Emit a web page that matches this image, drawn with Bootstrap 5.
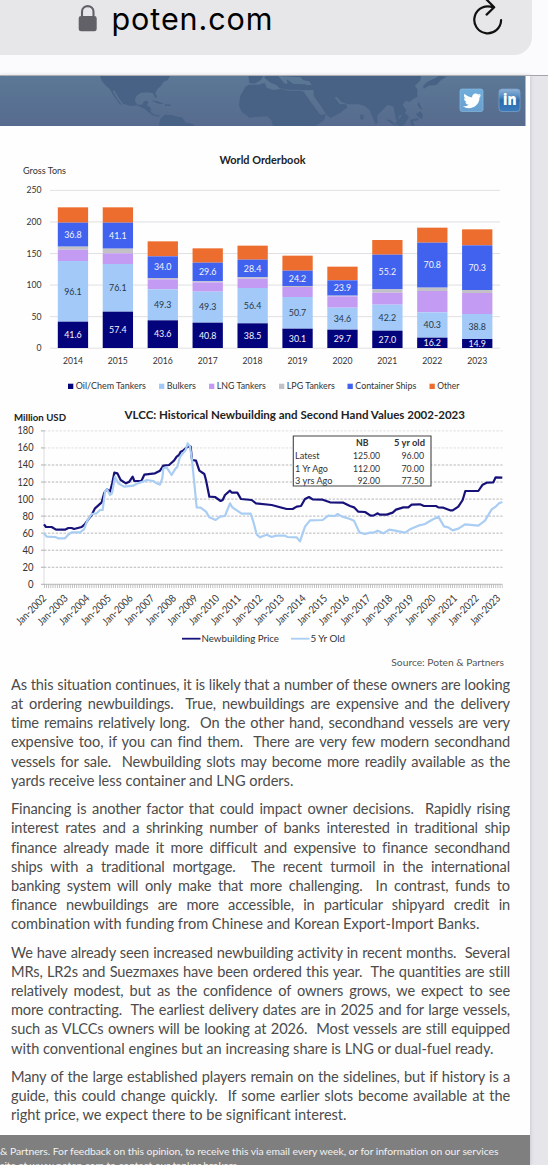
<!DOCTYPE html>
<html lang="en">
<head>
<meta charset="utf-8">
<meta name="viewport" content="width=device-width, initial-scale=1">
<title>poten.com</title>
<link href="https://cdn.jsdelivr.net/npm/bootstrap@5.3.0/dist/css/bootstrap.min.css" rel="stylesheet">
<style>
  body{background:#e5e5ea;font-family:Lato,"Open Sans",sans-serif;font-variant-ligatures:none;height:1165px;overflow:hidden}
  .browser-bar{height:76px;background:#fbfbfd;border-bottom:1px solid #a4a4aa}
  .address{width:532px;height:55px;background:#e7e7e9;border-radius:0 0 18px 0;font-family:Inter,sans-serif}
  .address svg{display:block}
  .host{font-size:30.5px;line-height:38px;color:#111}
  .sheet{width:530px;height:1089px;background:#fefefe;box-shadow:0 0 4px #bdbdc6}
  .banner{width:525.5px;height:50px;flex:none}
  .plot{display:block;flex:none}
  .plot text{font-family:Lato,sans-serif;fill:#333}
  .article{padding:0 20px 0 11px;color:#4c4c4c;font-size:14.6px;letter-spacing:-.14px;line-height:19.15px;height:460px;flex:none}
  .article p{margin:0 0 9.35px}
  .article span{display:block;white-space:nowrap;text-align:justify;text-align-last:justify}
  .article span:last-child{text-align-last:left;letter-spacing:-.02px}
  .source{height:27px;padding:7px 26px 0 0;font-size:10.25px;line-height:14px;color:#555;flex:none}
  .closing{background:#7f7f7f;color:#f2f2f2;height:31px;font-size:10.4px;letter-spacing:-.063px;line-height:14.4px;padding-top:9px;flex:none}
</style>
</head>
<body>
<header class="browser-bar">
  <div class="address">
    <svg width="532" height="55" viewBox="0 0 532 55">
      <rect x="78.7" y="16" width="18" height="15.3" rx="2.4" fill="#626167"/>
      <path d="M82 17v-5.2c0-7.6 11.5-7.6 11.5 0V17" fill="none" stroke="#626167" stroke-width="2.1"/>
      <text class="host" x="111.5" y="29.5" textLength="161">poten.com</text>
      <path d="M493.5 7.8a13.4 13.4 0 1 0 7.6 12.2M486 -1l8.2 8.2-7.6 7.4" fill="none" stroke="#111" stroke-width="2.2" stroke-linecap="round" stroke-linejoin="round"/>
    </svg>
  </div>
</header>
<main class="sheet d-flex flex-column">
  <svg class="banner" viewBox="0 76 525.5 50" preserveAspectRatio="none">
    <defs>
      <linearGradient id="sea" x2="0" y2="1"><stop stop-color="#5b7896"/><stop offset="1" stop-color="#576b8e"/></linearGradient>
      <linearGradient id="tw" x2="0" y2="1"><stop stop-color="#6faedb"/><stop offset="1" stop-color="#689fcf"/></linearGradient>
      <linearGradient id="li" x2="0" y2="1"><stop stop-color="#8fb2d6"/><stop offset=".3" stop-color="#5b90c6"/><stop offset=".5" stop-color="#286bae"/><stop offset="1" stop-color="#3d7bbb"/></linearGradient>
    </defs>
    <path fill="url(#sea)" d="M0 76h525.5v50H0z"/>
    <g fill="#476284" transform="scale(.3495 .3333)">
      <path d="M286 228H486L480 240 468 245 460 258 450 268 444 280 450 292 444 293 437 279 420 277 402 279 389 289 386 303 393 314 407 314 412 304 424 303 421 317 430 322 432 337 445 345 458 345 452 350 434 344 414 327 392 316 375 318 352 311 338 291 327 271 322 273 336 298 350 316 342 311 327 290 314 268 301 255 292 244Z"/>
      <path d="M434 302l15 1 20 9-15-1zM472 313l17 1-2 4-15-1zM455 378l3-20 14-14 20 1 15 5 14 2 9 15 23 6 6 10z"/>
      <path d="M711 228h42l-7 12-17 11-16-2zM760 228h36l17 22 10 2-3-14 20 14 35 1-2 18-50-2-23-4-8-9-18-8-18-15z"/>
      <path d="M711 254l29 0 17-5 6 14 18 7 25-3 18 5 35 0 10 3 18 28 17 25 13 17 16-2-6 18-26 18H782l-6-20-12-10-28 1-22 3-22-17-8-18 3-29 15-28z"/>
      <path d="M800 228H1205l-3 14-15 15 8 13-3 20-20 15-12-3-8 13 10 14-6 22-12-7-5 12 15 24-5 1-16-24-8-38-17-4-18 20-11 11 1 23-6 4-16-42-15-13-17-5-32 0-17-7-13-15-7 1 15 20 18 1 4 9-20 16-28 16-11-9-15-25-22-31-1-20-18 2-19-4 4-13 28 2-7-12-17-3-8-9z"/>
      <path d="M1031 343l10 3-2 14-8-3zM1222 246l24-12 10-7 23 3-17 10-14 15-22 2-13 9-3-7zM1189 278l7 10-7 6zM1197 304l5 12 7 13-7-3-7-11zM1103 358l15 3 20 17-15-5zM1130 369l20-22 12-6 8 11-13 22-15 4zM1174 359l20-4 5 5-17 4 3 14-10-4zM1190 342l13-8 7 12-3 12-10-7z"/>
    </g>
    <rect x="460" y="89" width="23" height="22.5" rx="2" fill="url(#tw)" stroke="#86b9df" stroke-width=".7"/>
    <path fill="#fff" transform="translate(461.8 91) scale(1.2 1.15)" d="M.8 13.3c2 .1 3.5-.3 5-1.4-1.5-.2-2.5-1-2.9-2.2h1.4C2.7 9.1 1.8 8 1.8 6.4l1.5.4C1.8 5.5 1.5 4 2.3 2.4c1.8 2 3.8 3 6.3 3.2-.4-2.9 2.9-4.7 5.2-2.5l2-.8-1.2 1.9 1.7-.4-1.5 1.7c.1 7.5-7.7 12.2-14 7.8z"/>
    <rect x="499" y="89" width="21" height="22.5" rx="3" fill="url(#li)" stroke="#7ba4cf" stroke-width=".7"/>
    <text x="503" y="104.5" textLength="13.5" lengthAdjust="spacingAndGlyphs" font-family="Open Sans" font-size="15" font-weight="800" fill="#fff">in</text>
  </svg>

  <svg class="plot" id="orderbook" width="525" height="274" viewBox="0 126 525 274"></svg>
  <svg class="plot" id="values" width="525" height="248" viewBox="0 400 525 248"></svg>

  <div class="source text-end">Source: Poten &amp; Partners</div>
  <article class="article">
    <p><span>As this situation continues, it is likely that a number of these owners are looking</span>
    <span>at ordering newbuildings.&nbsp; True, newbuildings are expensive and the delivery</span>
    <span>time remains relatively long.&nbsp; On the other hand, secondhand vessels are very</span>
    <span>expensive too, if you can find them.&nbsp; There are very few modern secondhand</span>
    <span>vessels for sale.&nbsp; Newbuilding slots may become more readily available as the</span>
    <span>yards receive less container and LNG orders.</span></p>
    <p><span>Financing is another factor that could impact owner decisions.&nbsp; Rapidly rising</span>
    <span>interest rates and a shrinking number of banks interested in traditional ship</span>
    <span>finance already made it more difficult and expensive to finance secondhand</span>
    <span>ships with a traditional mortgage.&nbsp; The recent turmoil in the international</span>
    <span>banking system will only make that more challenging.&nbsp; In contrast, funds to</span>
    <span>finance newbuildings are more accessible, in particular shipyard credit in</span>
    <span>combination with funding from Chinese and Korean Export-Import Banks.</span></p>
    <p><span>We have already seen increased newbuilding activity in recent months.&nbsp; Several</span>
    <span>MRs, LR2s and Suezmaxes have been ordered this year.&nbsp; The quantities are still</span>
    <span>relatively modest, but as the confidence of owners grows, we expect to see</span>
    <span>more contracting.&nbsp; The earliest delivery dates are in 2025 and for large vessels,</span>
    <span>such as VLCCs owners will be looking at 2026.&nbsp; Most vessels are still equipped</span>
    <span>with conventional engines but an increasing share is LNG or dual-fuel ready.</span></p>
    <p><span>Many of the large established players remain on the sidelines, but if history is a</span>
    <span>guide, this could change quickly.&nbsp; If some earlier slots become available at the</span>
    <span>right price, we expect there to be significant interest.</span></p>
  </article>
  <footer class="closing text-nowrap overflow-hidden">
    <div>&amp; Partners. For feedback on this opinion, to receive this via email every week, or for information on our services</div>
    <div>site at www.poten.com to contact our tanker brokers.</div>
  </footer>
</main>
<script>
const text = (x, y, s, size, o = {}) =>
  `<text x="${x}" y="${y}" font-size="${size}" text-anchor="${o.a || 'start'}" ${o.b ? 'font-weight="700"' : ''} ${o.w ? `textLength="${o.w}" lengthAdjust="spacingAndGlyphs"` : ''} ${o.f ? `style="fill:${o.f}"` : ''} ${o.t ? `transform="${o.t}"` : ''}>${s}</text>`;

/* Stacked bars: boundaries of each stack, top to bottom, in thirds of a pixel */
const stacks = [
  [202,248,320,329,363,545],[202,248,326,340,372,515],[304,349,414,418,448,541],
  [325,368,424,427,455,548],[317,359,412,416,444,550],[347,392,438,441,471,566],
  [380,421,467,469,503,569],[300,344,448,458,494,572],[263,308,443,453,517,593],[268,316,450,459,522,597]];
const labels = [['36.8','96.1','41.6'],['41.1','76.1','57.4'],['34.0','49.3','43.6'],['29.6','49.3','40.8'],['28.4','56.4','38.5'],
  ['24.2','50.7','30.1'],['23.9','34.6','29.7'],['55.2','42.2','27.0'],['70.8','40.3','16.2'],['70.3','38.8','14.9']];
const fills = ['#ec6d2d','#4062ee','#c2c2c6','#c49bf3','#a2c9f7','#03037c'];
let h = text(219.5, 164, 'World Orderbook', 10.5, {b:1, w:86, f:'#222'}) + text(23, 174, 'Gross Tons', 9, {w:43});
for (let v = 0; v <= 250; v += 50) {
  const y = 348.2 - v * .6312;
  h += `<path d="M50 ${y}H500" stroke="#dedee2" stroke-width=".9"/>` + text(41.5, y + 3, v, 9, {a:'end', w:v ? (v < 100 ? 10 : 15) : 5});
}
stacks.forEach((s, i) => {
  const x = 57.8 + i * 44.92, e = [...s, 624];
  fills.forEach((f, k) => h += `<rect x="${x}" y="${140 + e[k] / 3}" width="30.3" height="${(e[k + 1] - e[k]) / 3}" fill="${f}"/>`);
  [1, 4, 5].forEach((k, n) => h += text(x + 15.1, 140 + (e[k] + e[k + 1]) / 6 + 3.2, labels[i][n], 9, {a:'middle', w:17.5, f:k == 4 ? '#283748' : '#f2f4ff'}));
  h += text(x + 15.1, 363.5, 2014 + i, 9, {a:'middle', w:20});
});
[[68,'Oil/Chem Tankers',70,5],[159,'Bulkers',29,4],[209,'LNG Tankers',49,3],[279,'LPG Tankers',48,2],[347.5,'Container Ships',61,1],[429.5,'Other',22,0]]
  .forEach(([x, s, w, c]) => h += `<rect x="${x}" y="383.7" width="5.3" height="5.3" fill="${fills[c]}"/>` + text(x + 7.8, 389.2, s, 9, {w}));
document.getElementById('orderbook').innerHTML = h;

/* Price history, points in thirds of a pixel */
const nb = '132,373 138,381 155,381 168,389 195,389 205,384 215,384 222,387 245,381 255,372 265,358 275,345 285,325 305,307 313,278 321,268 330,275 337,248 343,218 352,220 362,240 378,250 388,245 398,230 403,243 424,243 433,224 465,220 480,212 490,197 507,195 522,182 530,170 537,165 542,155 549,152 563,140 572,140 576,180 588,182 598,212 613,222 618,240 628,290 645,291 662,303 668,300 675,285 690,272 695,278 712,278 723,297 755,300 768,310 815,315 860,327 878,327 890,320 903,318 915,297 927,291 938,298 968,299 990,307 1030,308 1050,318 1062,322 1075,335 1095,336 1112,347 1122,346 1132,340 1140,344 1160,344 1178,338 1188,329 1210,322 1225,322 1235,314 1260,313 1272,318 1308,318 1315,322 1330,323 1350,331 1358,331 1375,320 1388,300 1396,273 1435,273 1448,254 1460,248 1480,247 1487,232 1507,233';
const old = '132,400 140,410 165,411 175,415 195,415 205,404 215,397 240,397 252,388 262,362 275,342 290,340 300,330 308,330 315,275 321,268 330,285 336,280 345,230 355,250 372,260 400,257 413,250 435,243 440,240 460,243 470,250 480,254 487,235 490,205 500,203 515,225 525,208 532,200 540,170 557,150 563,130 570,140 576,180 590,322 602,323 618,335 628,352 647,360 660,350 675,348 690,310 697,322 725,341 752,341 760,365 770,403 780,412 800,404 815,411 828,407 855,407 862,411 890,412 900,424 915,380 930,361 968,360 985,347 1005,348 1013,342 1025,349 1050,357 1062,362 1078,397 1095,402 1110,398 1120,398 1133,392 1150,400 1168,389 1185,392 1215,398 1230,388 1255,377 1275,372 1295,360 1315,350 1332,379 1345,382 1358,391 1375,386 1395,373 1435,377 1455,362 1475,328 1487,320 1497,310 1507,306';
h = text(14, 420.5, 'Million USD', 10.3, {b:1, w:52, f:'#222'}) + text(124.5, 418.5, 'VLCC: Historical Newbuilding and Second Hand Values 2002-2023', 12, {b:1, w:340.5, f:'#222'});
for (let v = 0; v <= 180; v += 20) {
  const y = 584.3 - v * .8522;
  h += `<path d="M44 ${y}H502.5" stroke="${v > 140 ? '#d8d8dc' : '#a6a6aa'}" stroke-width=".8" ${v ? 'stroke-dasharray="2.4 1.5"' : ''}/><path d="M41 ${y}h3.5" stroke="#999" stroke-width=".8"/>` +
    text(33.5, y + 3.5, v, 10.5, {a:'end', w:v ? (v < 100 ? 11 : 16) : 5.5});
}
h += '<path d="M44 430.9V585" stroke="#c8c8cc" stroke-width=".6"/><path d="M44 586.2H502.5" stroke="#aaa" stroke-width="3.4" stroke-dasharray=".7 1.46"/>';
for (let i = 0; i < 22; i++) {
  const x = 47 + i * 21.62;
  h += text(x, 599, 'Jan-' + (2002 + i), 10.5, {a:'end', w:38, t:`rotate(-45 ${x} 599)`});
}
const line = (p, c) => `<polyline points="${p}" fill="none" stroke="${c}" stroke-width="6.6" stroke-linejoin="round"/>`;
h += `<g transform="translate(0 400) scale(.33333)">${line(nb, '#17127a')}${line(old, '#a9cdf3')}</g>`;
h += '<path d="M293.3 436H431V486H293.3z" fill="#fff" stroke="#444" stroke-width="1.1"/>';
h += text(356, 446, 'NB', 9.5, {b:1, w:12.5}) + text(394, 446, '5 yr old', 9.5, {b:1, w:31});
[['Latest',24.5,'125.00','96.00'],['1 Yr Ago',33,'112.00','70.00'],['3 yrs Ago',37.5,'92.00','77.50']].forEach(([s, w, a, b], i) => {
  const y = 459 + i * 12.7;
  h += text(295, y, s, 9.5, {w}) + text(380, y, a, 9.5, {a:'end', w:i < 2 ? 27 : 22.5}) + text(424, y, b, 9.5, {a:'end', w:22.5});
});
h += '<path d="M182 638.7h18.5" stroke="#17127a" stroke-width="1.8"/><path d="M291 638.7h18.5" stroke="#a9cdf3" stroke-width="1.8"/>';
h += text(201.5, 642, 'Newbuilding Price', 10, {w:77.5}) + text(310.5, 642, '5 Yr Old', 10, {w:34.5});
document.getElementById('values').innerHTML = h;
</script>
<script src="https://cdn.jsdelivr.net/npm/bootstrap@5.3.0/dist/js/bootstrap.bundle.min.js"></script>
</body>
</html>
